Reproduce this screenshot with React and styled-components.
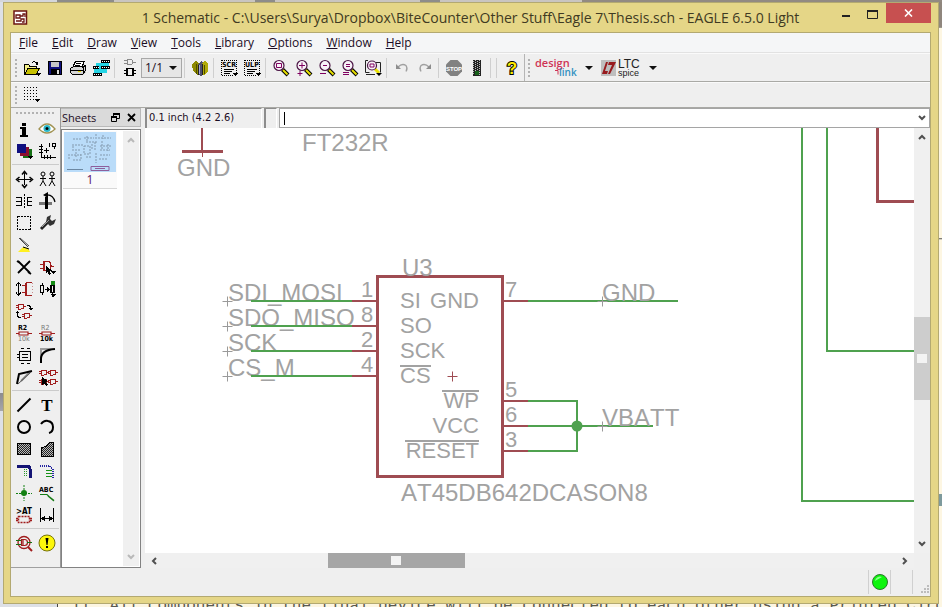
import React from "react";
import styled, { createGlobalStyle, css } from "styled-components";

const ui = '"Open Sans", "Noto Sans", sans-serif';
const small = '"DejaVu Sans Condensed", "Open Sans", sans-serif';
const chrome = "#efefef";
const gold = "#e5d687";
const goldEdge = "#b3a971";

const Global = createGlobalStyle`
  * { box-sizing: border-box; }
  body { margin: 0; background: #fdf6e2; font-family: ${ui}; font-size: 12px; color: #1b0c24; }
  button, input, select { font: inherit; color: inherit; }
`;

/* ---------- desktop and window frame ---------- */

const Desktop = styled.div`
  display: grid;
  grid-template: 2px minmax(0, 1fr) 3px / 3px minmax(0, 1fr) 3px;
  height: 100vh;
  overflow: hidden;
`;
const TabStrip = styled.div`
  grid-column: 1 / -1;
  background: linear-gradient(90deg, #d4d6da 57px, #8d8c8a 57px, #8d8c8a 114px, #c9c5c0 114px, #c9c5c0 255px, #8d8c8a 255px, #8d8c8a 275px, #c9c5c0 275px, #c9c5c0 420px, #8d8c8a 420px, #8d8c8a 440px, #c9c5c0 440px, #c9c5c0 582px, #928a82 582px);
`;
const LeftEdge = styled.div`
  background: linear-gradient(#dde0e6 391px, #8c8c90 391px, #a6a6aa 409px, #dde0e6 409px);
`;
const RightEdge = styled.div`
  background: linear-gradient(#8f867d 25px, #3c3c3c 25px, #fdf6e2 26px, #fdf6e2 236px, #555 236px, #fdf6e2 238px, #fdf6e2 492px, #7e9a9c 492px, #7e9a9c 504px, #fdf6e2 504px);
`;
const PageLine = styled.p`
  grid-column: 1 / -1;
  margin: 0;
  padding-left: 71px;
  background: linear-gradient(90deg, #dde0e6 57px, #444 57px, #444 58px, #fdf6e2 58px);
  font: 16px/4px "Liberation Mono", monospace;
  white-space: pre;
  overflow: hidden;
  color: #5a5a52;
`;
const Window = styled.main`
  display: flex;
  flex-direction: column;
  min-width: 0;
  min-height: 0;
  padding: 0 7px 6px 6px;
  background: ${gold};
  border: 1px solid ${goldEdge};
`;
const TitleBar = styled.header`
  display: grid;
  grid-template-columns: 1fr auto 1fr;
  align-items: center;
  height: 29px;
  flex: none;
`;
const AppMark = styled.svg`
  width: 16px;
  height: 16px;
  margin-left: 3px;
`;
const Title = styled.h1`
  margin: 0;
  padding-top: 1px;
  font: 400 14px/20px ${ui};
  color: #3f3a22;
  white-space: nowrap;
`;
const WindowButtons = styled.div`
  display: flex;
  justify-content: flex-end;
  align-self: start;
`;
const WindowButton = styled.button`
  display: grid;
  place-items: center;
  width: ${(p) => (p.$close ? 45 : 27)}px;
  height: ${(p) => (p.$close ? 20 : 22)}px;
  padding: 0;
  border: 0;
  background: ${(p) => (p.$close ? "#c75050" : "transparent")};
`;
const Client = styled.div`
  display: flex;
  flex-direction: column;
  flex: 1;
  min-height: 0;
  border: 1px solid ${goldEdge};
  background: ${chrome};
`;

/* ---------- menu and tool bars ---------- */

const MenuBar = styled.nav`
  display: flex;
  gap: 14px;
  height: 20px;
  flex: none;
  padding-left: 8px;
  background: #f5f6f7;
  border-bottom: 1px solid #e2e2e2;
`;
const MenuItem = styled.button`
  padding: 0;
  border: 0;
  background: none;
  font: 12px/20px ${ui};
  &::first-letter { text-decoration: underline; }
`;
const ToolBar = styled.div`
  display: flex;
  align-items: center;
  height: ${(p) => p.$height}px;
  flex: none;
  padding-left: 3px;
  border-top: 1px solid #fafafa;
  border-bottom: ${(p) => p.$rule}px solid #a9a9a5;
`;
const grip = css`
  background-image: radial-gradient(circle, #b2b2b2 1px, transparent 1px);
  background-size: 4px 4px;
`;
const Grip = styled.span`
  width: 4px;
  height: 20px;
  margin-right: 2px;
  ${grip}
`;
const IconButton = styled.button`
  display: grid;
  place-items: center;
  width: 23px;
  height: 22px;
  padding: 0;
  border: 0;
  background: none;
  svg { overflow: visible; }
`;
const Separator = styled.span`
  width: 1px;
  height: 20px;
  margin: 0 3px 0 2px;
  background: #cfcfcf;
`;
const BarEdge = styled.span`
  width: 1px;
  height: 27px;
  margin: 0 2px 0 1px;
  background: #b5b5b5;
`;
const SheetPicker = styled.div`
  display: grid;
  align-items: center;
  select, svg { grid-area: 1 / 1; }
  select {
    appearance: none;
    width: 41px;
    height: 20px;
    padding: 0 0 0 3px;
    border: 1px solid #a8a8a8;
    border-radius: 0;
    background: #e6e6e6;
    font: 12px/18px ${ui};
  }
  svg { justify-self: end; margin-right: 5px; pointer-events: none; }
`;
const BrandButton = styled.button`
  display: flex;
  align-items: center;
  gap: 6px;
  padding: 0;
  margin-right: 8px;
  border: 0;
  background: none;
`;

/* ---------- body ---------- */

const Body = styled.div`
  display: flex;
  flex: 1;
  min-height: 0;
`;
const Palette = styled.aside`
  width: 49px;
  padding: 1px 1px 0;
  border-bottom: 1px solid #a0a0a0;
`;
const PaletteGrip = styled.div`
  height: 8px;
  margin: 0 3px;
  background-image: radial-gradient(circle, #b2b2b2 1px, transparent 1px);
  background-size: 4px 8px;
`;
const ToolGroup = styled.div`
  display: grid;
  grid-template-columns: 23px 23px;
  grid-auto-rows: 22px;
  padding: 1px 0 2px;
  & + & { border-top: 1px solid #cbcbcb; padding-top: 3px; }
`;
const Empty = styled.span``;

const Sheets = styled.section`
  display: flex;
  flex-direction: column;
  width: 81px;
  border-left: 1px solid #9a9a9a;
`;
const SheetsHead = styled.div`
  display: flex;
  align-items: center;
  gap: 7px;
  height: 19px;
  padding: 0 4px 0 1px;
  border: 1px solid #b9b9b9;
  border-left: 0;
  background: #dadada;
`;
const SheetsTitle = styled.h2`
  flex: 1;
  margin: 0;
  font: 400 11px/17px ${ui};
`;
const TinyButton = styled.button`
  display: grid;
  padding: 0;
  border: 0;
  background: none;
  color: #505050;
`;
const SheetsBox = styled.div`
  display: flex;
  justify-content: space-between;
  flex: 1;
  min-height: 0;
  margin-top: 2px;
  padding: 1px;
  border: 1px solid #828282;
  background: #fff;
`;
const SheetItem = styled.button`
  align-self: start;
  width: 54px;
  padding: 1px 1px 0;
  border: 0;
  border-bottom: 1px solid #d8d8d8;
  background: #fafafa;
  font: 12px/16px ${ui};
  color: #5c0f63;
  svg { display: block; }
`;

const Editor = styled.section`
  display: flex;
  flex-direction: column;
  flex: 1;
  min-width: 0;
  margin-left: 4px;
`;
const CommandRow = styled.div`
  display: flex;
  gap: 2px;
  height: 20px;
  flex: none;
`;
const Readout = styled.output`
  width: ${(p) => p.$width}px;
  padding-left: 2px;
  border: 1px solid #8d8d8d;
  border-width: 1px 0 0 2px;
  border-right: 1px solid #fff;
  font: 11px/18px ${small};
  white-space: nowrap;
`;
const CommandBox = styled.div`
  display: flex;
  align-items: center;
  flex: 1;
  min-width: 0;
  padding: 0 3px 0 4px;
  border: 1px solid #a5a5a5;
  background: #fff;
`;
const Caret = styled.span`
  width: 1px;
  height: 13px;
  background: #000;
`;
const CommandInput = styled.input`
  flex: 1;
  min-width: 0;
  padding: 0;
  border: 0;
  outline: 0;
  background: none;
`;
const Viewport = styled.div`
  display: grid;
  grid-template: minmax(0, 1fr) 15px / minmax(0, 1fr) 16px;
  flex: 1;
  min-height: 0;
`;
const Drawing = styled.svg`
  width: 100%;
  height: 100%;
  background: #fff;
  font-family: "Liberation Sans", Arial, sans-serif;
  font-size: 24px;
  font-kerning: none;
  fill: #a2a2a2;
`;
const ScrollTrack = styled.div`
  display: flex;
  flex-direction: ${(p) => (p.$vertical ? "column" : "row")};
  align-items: stretch;
  justify-content: space-between;
  background: #f0f0f0;
  ${(p) => p.$narrow && "width: 16px;"}
`;
const ScrollArrow = styled.button`
  display: grid;
  place-items: center;
  flex: 0 0 18px;
  padding: 0;
  border: 0;
  background: none;
  color: ${(p) => (p.$faint ? "#b9b9b9" : "#505050")};
`;
const Gap = styled.span`
  flex: ${(p) => p.$share} 1 0;
`;
const Thumb = styled.span`
  display: grid;
  place-items: center;
  flex: ${(p) => p.$share} 1 0;
  background: ${(p) => (p.$dark ? "#a6a6a6" : "#cdcdcd")};
  &::after { content: ""; width: 10px; height: 9px; background: #f3f3f3; }
`;
const StatusBar = styled.footer`
  display: flex;
  justify-content: flex-end;
  align-items: center;
  height: 28px;
  flex: none;
`;
const StatusCell = styled.span`
  display: grid;
  place-items: ${(p) => (p.$grip ? "end" : "center")};
  width: ${(p) => (p.$grip ? 18 : 22)}px;
  height: 24px;
  border-left: 1px solid #d0d0d0;
`;

/* ---------- icons: 18-unit grid ---------- */

const K = "#000";
const R = "#a01c1c";
const s = (d, stroke = K, w = 1, extra = {}) => (
  <path d={d} fill="none" stroke={stroke} strokeWidth={w} {...extra} />
);
const f = (d, fill = K, extra = {}) => <path d={d} fill={fill} {...extra} />;
const label = (x, y, size, text, fill = K, weight = "bold") => (
  <text x={x} y={y} fontSize={size} fontFamily="DejaVu Sans Condensed, sans-serif" fontWeight={weight} fill={fill}>{text}</text>
);
const corner = f("M12 14h6l-3 3z");
const lens = (
  <>
    {s("M10.5 10.5l5.5 5.5", "#000", 4)}
    {s("M11 11l4.500 4.500", "#e8e000", 2)}
    <circle cx="7" cy="6.500" r="5" fill="#f8f2f8" stroke="#4a1444" strokeWidth="1.200" />
  </>
);
const gate = (x, y, c = R) =>
  s(`M${x} ${y}h3q3 0 3 2.500q0 2.500-3 2.500h-3zM${x - 2} ${y + 1.5}h2M${x - 2} ${y + 3.5}h2M${x + 6} ${y + 2.5}h2`, c);
const frame = (
  <>
    {s("M1.500 1.500h15v12", K, 1, { strokeDasharray: "1 1" })}
    {s("M1.500 1v16M2 16.500h11", K, 1, { strokeDasharray: "1 1" })}
  </>
);

const icons = {
  open: <>{f("M1 5h5l1 2h6v2H5l-3 6z", "#f4f08a")}{f("M4 10h13l-4 6H1z", "#c6c000")}{s("M1.500 15.500v-10h4l1.500 2h6v2.500M4.500 9.500h12l-3.500 6h-11zM9 3.500q3-2 5 1M12.500 5.500h2v-3")}{corner}</>,
  save: <>{f("M2 2h14v14H2z", "#10107c")}{f("M5 2h8v6H5z", "#c6c6c6")}{f("M5 10h9v6H5z", "#000")}{f("M11 11h2v4h-2z", "#ddd")}{s("M2.500 2.500h13v13h-12l-1-1z")}</>,
  print: <>{f("M2 8l3-2h11l1 2v5l-3 3H4l-3-2z", "#d5d5d5")}{f("M6 2h9l-2 6H4z", "#fff")}{s("M6.500 2.500h8.500l-2 6M6.500 2.500l-2.500 5M1.500 9.500l3-2h10l2-1v5l-3 4h-10l-2-2zM2 11.500h12M7 4.500h5M6 6.500h5M14 8v6")}{f("M9 12h3v1H9z", "#e5dc00")}</>,
  cam: <>{f("M4 4h11v10H4z", "#25d5e5")}{f("M9 1h9v3H9zM9 7h9v3H9zM1 7h6v3H1zM1 14h9v3H1z")}{f("M9 4h8v3H9zM2 10h8v4H2z", "#25d5e5")}{s("M10 2.500h8M10 8.500h8M2 8.500h5M2 15.500h8", "#fff", 1, { strokeDasharray: "1 1" })}</>,
  schematic: <>{s("M6 .5h3q3 0 3 2.500t-3 2.500h-3zM3 1.500h3M3 4.500h3M12 3.500h3", "#8a8a8a")}{s("M6 9.500h6v7H6zM3 11.500h3M3 14.500h3M12 11.500h3M12 14.500h3", K, 1.5)}</>,
  library: <>{f("M1 5l4-3 3 2v10l-2 2-4-4z", "#8d8900")}{f("M7 5l3-3 3 2v11l-3 2-3-2z", "#50506e")}{f("M11 4l3-2 3 2v9l-4 3h-2z", "#b0aa08")}{s("M5.500 5v10M13.500 6v9", "#4f4c00")}{s("M8.500 6v9", "#a4a4d6")}{s("M7 5.500v10M11 5v11", "#222")}</>,
  scr: <>{frame}{label(2, 8, 7, "SCR")}{s("M4 10.500h10M4 12.500h8M4 14.500h6")}{corner}</>,
  ulp: <>{frame}{label(2, 8, 7, "ULP")}{s("M4 10.500h10M4 12.500h8M4 14.500h6")}{corner}</>,
  zoomFit: <>{lens}{s("M4.500 4.500h5v4h-5z", "#800060")}</>,
  zoomIn: <>{lens}{s("M7 3.500v6M4 6.500h6", "#800060")}{s("M5 12v5M2.500 14.500h5", "#800060")}</>,
  zoomOut: <>{lens}{s("M5 6.500h4", "#800060")}{s("M2 14.500h6", "#800060")}</>,
  zoomRedraw: <>{lens}{s("M5 5.500h4M5 7.500h4M2 13.500h6M2 15.500h6", "#800060")}</>,
  zoomSelect: <>{s("M4 1.500H1.500v12h4M12 3.500h4.500v10M2 15.500h9", "#222")}{s("M11 10l4 4", "#e8e000", 3)}<circle cx="8" cy="6.500" r="4.500" fill="#f8f2f8" stroke="#4a1444" strokeWidth="1.200" />{s("M6 5h4v3H6z", "#800060")}{corner}</>,
  undo: <>{s("M5 8q4-4 8-1.500q2 3 0 6", "#a0a0a0", 1.3)}{f("M3 5v5h5z", "#8d8d8d")}</>,
  redo: <>{s("M13 8q-4-4-8-1.500q-2 3 0 6", "#a0a0a0", 1.3)}{f("M15 5v5h-5z", "#8d8d8d")}</>,
  stop: <>{f("M5.500 1h7L17 5.500v7L12.500 17h-7L1 12.500v-7z", "#818181")}<text x="9" y="11.500" textAnchor="middle" fontSize="6" fontFamily="Liberation Sans, sans-serif" fontWeight="bold" fill="#fff">STOP</text></>,
  go: <>{f("M5 1h8v16H5z", "#222")}{s("M5.500 2v14M7.500 1v15M9.500 2v14M11.500 1v15", "#bbb", 1, { strokeDasharray: "1 1" })}{f("M7 12h4v4H7z", "#16601a")}</>,
  help: <text x="9" y="15" textAnchor="middle" fontSize="17" fontFamily="Liberation Sans, sans-serif" fontWeight="bold" fill="#ffec00" stroke="#000" strokeWidth="2" paintOrder="stroke">?</text>,
  grid: <>{[2, 5, 8, 11, 14].map((y) => <React.Fragment key={y}>{s(`M1 ${y - 0.5}h15`, K, 1, { strokeDasharray: "1 2" })}</React.Fragment>)}{f("M11 13h6l-3 3z")}</>,
  info: f("M7 3h4v3H7zM5 7h6v8h2v2H5v-2h2V9H5z"),
  eye: <>{f("M1 9q8-9 16 0q-8 8-16 0z", "#fff")}{s("M1 9q8-10 16 0q-8 8-16 0z", "#a09252", 1.3)}<circle cx="9" cy="8.500" r="3.500" fill="#28b8c8" /><circle cx="9" cy="8.500" r="1.500" /></>,
  layers: <>{f("M8 7h9v9H8z", "#157015")}{f("M5 5h9v9H5z", "#8c1030")}{f("M2 2h9v9H2z", "#101080")}{corner}</>,
  mark: <>{s("M3.500 2v13h14M1 4.500h4M1 7.500h4M1 10.500h4M6.500 13v4M9.500 13v4M12.500 13v4M6 8.500h5M8.500 6v5M11.500 1v4M14 1.500h3v3h-3zM16.500 4v3")}</>,
  move: <>{s("M9.500 3v12M3 9.500h13")}{s("M7 4.500l2.500-3 2.500 3M7 14.500l2.500 3 2.500-3M4.500 7l-3 2.500 3 2.500M14.500 7l3 2.500-3 2.500", K, 1.5)}</>,
  copy: <>{[5, 14].map((x) => <React.Fragment key={x}><circle cx={x} cy="4" r="2" fill="none" stroke="#000" />{s(`M${x} 6v5l-3 5M${x} 11l3 5M${x - 3} 8.500h6`)}</React.Fragment>)}</>,
  mirror: <>{s("M1 5.500h5v8h-5M1 9.500h5M17 5.500h-5v8h5M17 9.500h-5")}{s("M9.500 2v15", K, 1, { strokeDasharray: "2 1" })}</>,
  rotate: <>{f("M1 10h13v3H1z", "#777")}{f("M7 5h3v12H7z")}{s("M8 3q7-1 9 7", K, 1.2)}{f("M5 3l5-3v6z")}</>,
  group: s("M2.500 2.500h13v13h-13z", K, 1, { strokeDasharray: "2 1" }),
  change: <>{s("M3 15l8-8", "#222", 3)}{f("M8 8l1-5 4-2-1 4 2 2 4-2-2 5-4 2z", "#333")}{s("M4 13l7-7", "#999", 1)}</>,
  paste: <>{s("M4 2l9 9M5 2l9 8", "#444", 1)}{f("M8 11l5 1 2 4H3z", "#fff021")}{s("M8 11l6 2", K)}</>,
  remove: s("M3 3l12 12M15 3L3 15M2 3l3 2M13 14l3 2", K, 1.8),
  add: <>{s("M6 3.500h3q4 0 4 4.500t-4 4.500h-3zM2 6.500h4M2 10.500h4M13 8.500h3", R, 1.3)}{f("M8 8l7 5h-3l1 3-2 1-1-3-2 1z")}{f("M13 13h5l-3 3z")}</>,
  pinswap: <>{s("M3.500 3v12M1 5.500l2.500-3 2.500 3M1 12.500l2.500 3 2.500-3")}{s("M11 2.500v13M17 2.500h-6M11 15.500h6M7 5.500h4M7 12.500h4", R, 1.2)}{s("M17 3v12", "#c98d8d", 1, { strokeDasharray: "1 2" })}</>,
  replace: <>{s("M2.500 5.500h3v7h-3zM4.500 3v2M4.500 13v2M7 9.500h4M9 7.500l2 2-2 2")}{s("M13 5.500h3v7h-3zM14.500 2v3M14.500 13v4", K, 1.3)}{f("M13 1h4v4h-4z", "#148b14")}{f("M12 14h6l-3 3z")}</>,
  gateswap: <>{gate(3, 2)}{gate(9, 11)}{s("M12 3q4 0 4 5M6 16q-4 0-4-5")}{f("M13 6h5l-2 3zM1 11h4l-3-2z")}</>,
  name: <>{label(3, 6, 7, "R2")}{s("M1 9.500h3M13 9.500h4M4 8h9v3H4z", R, 1.2)}{label(3, 17, 7, "10k", "#777", "normal")}</>,
  value: <>{label(3, 6, 7, "R2", "#777", "normal")}{s("M1 9.500h3M13 9.500h4M4 8h9v3H4z", R, 1.2)}{label(2, 17, 7, "10k")}</>,
  smash: <>{s("M4 5.500h11M4 14.500h11M4.500 5v10M15.500 5v10M2 8.500h3M2 11.500h3")}{s("M7 8.500h6M7 11.500h6M6 2.500h3M12 2.500h3M6 17.500h3M12 17.500h3", K, 1)}</>,
  miter: <>{s("M3 16V3h13", "#9c9c9c", 2)}{s("M3 17v-4q0-9 14-10", K, 2)}</>,
  split: <>{s("M6 13L15 4", "#8c8c8c", 2)}{s("M2 16l2-10L17 3", K, 2)}{s("M3 16L16 4", "#555", 1)}</>,
  invoke: <>{gate(3, 2)}{gate(12, 2)}{gate(3, 11)}{gate(12, 11)}{f("M4 9l6 4-3 1 3 3-2 1-2-3-2 2z")}</>,
  wire: s("M2.500 15.500l13-13", K, 2),
  text: <text x="9" y="15" textAnchor="middle" fontSize="17" fontFamily="Liberation Serif, serif" fontWeight="bold" fill="#000">T</text>,
  circle: <circle cx="9" cy="9" r="6" fill="none" stroke="#000" strokeWidth="2" />,
  arc: s("M3 6q3-4 7-3q5 1 5 6q0 5-4 6", K, 2),
  rect: <>{f("M2 3h14v12H2z", "url(#hatch)")}{s("M2.500 3.500h13v11h-13z")}</>,
  polygon: <>{f("M3 8l5-2 3-4h5v14H3z", "url(#hatch)")}{s("M3.500 8l5-2 3-3.500h4v13.500h-12z")}</>,
  bus: <>{s("M2 4h10q3 0 3 3v9", "#141474", 3)}{s("M9 7.500h4M9 9.500h4M9 11.500h4M9 13.500h4", "#2b992b", 1, { strokeDasharray: "1 1" })}</>,
  net: <>{s("M2 3.500h9l4 4v9", "#2525a0", 2, { strokeDasharray: "1 1" })}{s("M8 8.500h6M8 11.500h6M8 14.500h6", "#159015", 1)}</>,
  junction: <><circle cx="9" cy="9" r="3" fill="#128012" />{s("M9 1v16M1 9.500h16", "#128012", 1, { strokeDasharray: "2 1" })}</>,
  netLabel: <>{label(1, 8, 7, "ABC")}{s("M2 10.500h7l2 2 5 4M10 12l6 5", "#167c16", 1.2)}</>,
  attribute: <>{label(1, 8, 8, ">AT")}{s("M3.500 10.500h11v6h-11zM1 12.500h2M1 14.500h2M15 12.500h2M15 14.500h2", R, 1.5, { strokeDasharray: "2 1" })}</>,
  dimension: <>{s("M2.500 2v14M15.500 2v14M3 12.500h12", K, 1.2)}{f("M3 12.500l4-3v6zM15 12.500l-4-3v6z")}</>,
  erc: <><circle cx="9" cy="8.500" r="6" fill="none" stroke={R} strokeWidth="1.300" />{s("M13 13l4 4", R, 2)}{s("M6.500 5.500h3q3 0 3 3t-3 3h-3zM8 6v5", R, 1.2)}{s("M1 6.500h5M1 10.500h5M12 8.500h5", "#147014", 1.2)}</>,
  errors: <><circle cx="9" cy="9" r="8" fill="#fdf70a" stroke="#77730a" />{f("M7.500 4h3l-1 7h-1zM8 12h2v2H8z")}</>,
};

const smoothIcons = ["stop", "errors", "help", "text", "eye", "circle", "wire", "arc", "remove", "undo", "redo", "junction", "change", "name", "value", "netLabel", "attribute", "move", "copy", "miter", "split", "erc", "zoomFit", "zoomIn", "zoomOut", "zoomRedraw", "zoomSelect", "paste", "rotate"];

const Icon = ({ name }) => (
  <svg width="18" height="18" viewBox="0 0 18 18" aria-hidden="true" shapeRendering={smoothIcons.includes(name) ? "auto" : "crispEdges"}>
    {icons[name]}
  </svg>
);
const Tool = ({ name }) => <IconButton aria-label={name}><Icon name={name} /></IconButton>;

const DownTriangle = () => (
  <svg width="8" height="4" viewBox="0 0 8 4" aria-hidden="true"><path d="M0 0h8l-4 4z" fill="#111" /></svg>
);
const chevrons = { up: "M1 6l3-3 3 3", down: "M1 2l3 3 3-3", left: "M6 1L3 4l3 3", right: "M2 1l3 3-3 3" };
const Chevron = ({ dir }) => (
  <svg width="8" height="8" viewBox="0 0 8 8" aria-hidden="true">
    <path d={chevrons[dir]} fill="none" stroke="currentColor" strokeWidth="2" />
  </svg>
);
const Tools = ({ names }) => names.map((n, i) => (n === "|" ? <Separator key={i} /> : <Tool key={i} name={n} />));

/* ---------- schematic ---------- */

const WIRE = "#4fa14f";
const PART = "#9f4c52";
const nets = [["SDI_MOSI", 1, 301], ["SDO_MISO", 8, 326], ["SCK", 2, 351], ["CS_M", 4, 376]];
const Cross = ({ x, y, color = "#9a9a9a" }) => <path d={`M${x - 5} ${y}h10M${x} ${y - 5}v10`} stroke={color} fill="none" />;

const Schematic = () => (
  <Drawing role="img" aria-label="Schematic sheet 1">
    <g transform="translate(-145 -128)">
      <path d="M202 100v52" stroke={PART} strokeWidth="2" />
      <path d="M202.500 152v5" stroke={PART} />
      <path d="M182 151.500h41" stroke={PART} strokeWidth="3" />
      <text x="177" y="176">GND</text>
      <text x="302" y="151">FT232R</text>

      <g fill="none" stroke={WIRE} strokeWidth="2">
        <path d="M802 100v401h3000M827 100v251h3000" />
        <path d="M528 301h150M528 401h49v50h-49M528 426h125" />
      </g>
      <path d="M877.500 100v101.500h3000" fill="none" stroke={PART} strokeWidth="3" />
      <circle cx="577" cy="426" r="5.500" fill={WIRE} />

      {nets.map(([name, pin, y]) => (
        <g key={name}>
          <text x="228" y={y}>{name}</text>
          <text x="361" y={y - 4} fontSize="22">{pin}</text>
          <path d={`M251 ${y}h101`} stroke={WIRE} strokeWidth="2" />
          <path d={`M352 ${y}h25`} stroke={PART} strokeWidth="2" />
          <Cross x={227.5} y={y + 0.5} />
        </g>
      ))}
      {[[7, 301], [5, 401], [6, 426], [3, 451]].map(([pin, y]) => (
        <g key={pin}>
          <text x="505" y={y - 4} fontSize="22">{pin}</text>
          <path d={`M503 ${y}h25`} stroke={PART} strokeWidth="2" />
        </g>
      ))}
      <rect x="377.500" y="276.500" width="125" height="200" fill="none" stroke={PART} strokeWidth="3" />
      <text x="402" y="276">U3</text>
      <text x="401" y="501">AT45DB642DCASON8</text>
      <g fontSize="22">
        <text x="400" y="308">SI</text>
        <text x="400" y="333">SO</text>
        <text x="400" y="358">SCK</text>
        <text x="400" y="383">CS</text>
        <g textAnchor="end">
          <text x="479" y="308">GND</text>
          <text x="479" y="408">WP</text>
          <text x="479" y="433">VCC</text>
          <text x="479" y="458">RESET</text>
        </g>
      </g>
      <path d="M400 366h31M442 391h37M405 441h74" stroke="#a2a2a2" strokeWidth="2" />
      <Cross x={452.5} y={376.5} color={PART} />
      <text x="602" y="301">GND</text>
      <text x="602" y="426">VBATT</text>
      <Cross x={602.5} y={301.5} />
      <Cross x={602.5} y={426.5} />
    </g>
  </Drawing>
);

const SheetPreview = () => (
  <svg width="52" height="40" viewBox="0 0 52 40" aria-hidden="true">
    <rect width="52" height="40" fill="#badcf9" />
    <g fill="none" stroke="#8299ae" strokeDasharray="2 1">
      <path d="M9 7h8M20 6h10M23 4v5M32 2v6M34 6h13M8 13h12M22 10h12M31 10v8M36 14h12M8 18h8M20 14h6v8h-6zM36 18h10M7 23h10M9 28h9M22 25h6M32 21v10M36 23h10M35 27h9" />
      <path d="M9 14v3M12 20v6M5 22v6M17 22v5M38 9v9M44 12v7M39 3v4M28 12v5" />
    </g>
    <path d="M3 37.500h16" stroke="#6c88a2" />
    <path d="M27 34.500h18v4h-18zM31 36.500h10" fill="none" stroke="#8d5f9c" />
  </svg>
);

const menus = ["File", "Edit", "Draw", "View", "Tools", "Library", "Options", "Window", "Help"];

export default function App() {
  return (
    <Desktop>
      <Global />
      <TabStrip />
      <LeftEdge />
      <Window>
        <TitleBar>
          <AppMark viewBox="0 0 16 16" aria-hidden="true">
            <path d="M1 1h12.500v13H1z" fill="#fff" stroke="#6b1512" strokeWidth="1.500" />
            <path d="M3 5h4v3H3zM7 6h3V4h2v3M3 11h5v-2h3v3h-2" fill="none" stroke="#6b1512" strokeWidth="1.300" />
          </AppMark>
          <Title>1 Schematic - C:\Users\Surya\Dropbox\BiteCounter\Other Stuff\Eagle 7\Thesis.sch - EAGLE 6.5.0 Light</Title>
          <WindowButtons>
            <WindowButton aria-label="Minimize">
              <svg width="10" height="10" viewBox="0 0 10 10"><path d="M1 7h8" stroke="#222" strokeWidth="2" /></svg>
            </WindowButton>
            <WindowButton aria-label="Maximize">
              <svg width="11" height="9" viewBox="0 0 11 9"><path d="M.5 1h10v7.500H.5z" fill="none" stroke="#222" /><path d="M0 1h11" stroke="#222" strokeWidth="2" /></svg>
            </WindowButton>
            <WindowButton $close aria-label="Close">
              <svg width="9" height="8" viewBox="0 0 9 8"><path d="M1 .5l7 7M8 .5l-7 7" stroke="#fff" strokeWidth="1.600" /></svg>
            </WindowButton>
          </WindowButtons>
        </TitleBar>
        <Client>
          <MenuBar>{menus.map((m) => <MenuItem key={m}>{m}</MenuItem>)}</MenuBar>
          <ToolBar $height={29} $rule={1}>
            <Grip />
            <Tools names={["open", "save", "print", "cam", "|", "schematic"]} />
            <SheetPicker>
              <select aria-label="Sheet" defaultValue="1/1"><option>1/1</option></select>
              <DownTriangle />
            </SheetPicker>
            <Tools names={["|", "library", "|", "scr", "ulp", "|", "zoomFit", "zoomIn", "zoomOut", "zoomRedraw", "zoomSelect", "|", "undo", "redo", "|", "stop", "go", "|", "|", "help"]} />
            <BarEdge />
            <Grip />
            <BrandButton aria-label="design link">
              <svg width="46" height="22" viewBox="0 0 46 22" fontFamily="Open Sans, sans-serif" fontWeight="600">
                <text x="2" y="10" fontSize="11" fill="#cf3455">design</text>
                <text x="26" y="19" fontSize="10" fill="#2f8fc0">link</text>
                <path d="M22 13.500h3v4" fill="none" stroke="#cf3455" />
              </svg>
              <DownTriangle />
            </BrandButton>
            <BrandButton aria-label="LTC spice">
              <svg width="42" height="20" viewBox="0 0 42 20" fontFamily="Liberation Sans, sans-serif" fill="#222">
                <path d="M0 2h15v16H0z" fill="#bebebe" />
                <path d="M5 4h2L4 13h3l-1 3H1zM8 4h7L9 16H7l4-9H7z" fill="#981b1e" />
                <text x="17" y="10" fontSize="12">LTC</text>
                <text x="17" y="18" fontSize="9">spice</text>
              </svg>
              <DownTriangle />
            </BrandButton>
          </ToolBar>
          <ToolBar $height={26} $rule={1}>
            <Grip />
            <Tool name="grid" />
          </ToolBar>
          <Body>
            <Palette>
              <PaletteGrip />
              <ToolGroup><Tools names={["info", "eye", "layers", "mark"]} /></ToolGroup>
              <ToolGroup>
                <Tools names={["move", "copy", "mirror", "rotate", "group", "change", "paste"]} />
                <Empty />
                <Tools names={["remove", "add", "pinswap", "replace", "gateswap"]} />
                <Empty />
                <Tools names={["name", "value", "smash", "miter", "split", "invoke"]} />
              </ToolGroup>
              <ToolGroup>
                <Tools names={["wire", "text", "circle", "arc", "rect", "polygon", "bus", "net", "junction", "netLabel", "attribute", "dimension"]} />
              </ToolGroup>
              <ToolGroup><Tools names={["erc", "errors"]} /></ToolGroup>
            </Palette>
            <Sheets>
              <SheetsHead>
                <SheetsTitle>Sheets</SheetsTitle>
                <TinyButton aria-label="Float panel">
                  <svg width="9" height="9" viewBox="0 0 9 9" fill="none" stroke="#000"><path d="M2.500 3V.5h6v5H6M.5 3.500h5v5h-5z" /><path d="M2 1h7M0 4h6" strokeWidth="2" /></svg>
                </TinyButton>
                <TinyButton aria-label="Close panel">
                  <svg width="9" height="9" viewBox="0 0 9 9"><path d="M1 1l7 7M8 1L1 8" stroke="#000" strokeWidth="1.800" /></svg>
                </TinyButton>
              </SheetsHead>
              <SheetsBox>
                <SheetItem><SheetPreview />1</SheetItem>
                <ScrollTrack $vertical $narrow>
                  <ScrollArrow $faint aria-label="Scroll sheets up"><Chevron dir="up" /></ScrollArrow>
                  <ScrollArrow $faint aria-label="Scroll sheets down"><Chevron dir="down" /></ScrollArrow>
                </ScrollTrack>
              </SheetsBox>
            </Sheets>
            <Editor>
              <CommandRow>
                <Readout $width={117}>0.1 inch (4.2 2.6)</Readout>
                <Readout $width={13} />
                <CommandBox>
                  <Caret />
                  <CommandInput aria-label="Command line" />
                  <TinyButton aria-label="Command history"><Chevron dir="down" /></TinyButton>
                </CommandBox>
              </CommandRow>
              <Viewport>
                <Schematic />
                <ScrollTrack $vertical>
                  <ScrollArrow aria-label="Scroll up"><Chevron dir="up" /></ScrollArrow>
                  <Gap $share={171} /><Thumb $share={83} /><Gap $share={135} />
                  <ScrollArrow aria-label="Scroll down"><Chevron dir="down" /></ScrollArrow>
                </ScrollTrack>
                <ScrollTrack>
                  <ScrollArrow aria-label="Scroll left"><Chevron dir="left" /></ScrollArrow>
                  <Gap $share={165} /><Thumb $dark $share={137} /><Gap $share={432} />
                  <ScrollArrow aria-label="Scroll right"><Chevron dir="right" /></ScrollArrow>
                </ScrollTrack>
              </Viewport>
            </Editor>
          </Body>
          <StatusBar>
            <StatusCell>
              <svg width="18" height="18" viewBox="0 0 18 18" aria-label="Ready">
                <circle cx="9" cy="9" r="7.500" fill="#0df50d" stroke="#2b7a2b" />
                <path d="M4 8a5 5 0 0 1 7-4z" fill="#8dff8d" />
              </svg>
            </StatusCell>
            <StatusCell />
            <StatusCell $grip>
              <svg width="9" height="9" viewBox="0 0 9 9" aria-hidden="true"><path d="M6 0h2v2H6zM3 3h2v2H3zM6 3h2v2H6zM0 6h2v2H0zM3 6h2v2H3zM6 6h2v2H6z" fill="#bcbcbc" /></svg>
            </StatusCell>
          </StatusBar>
        </Client>
      </Window>
      <RightEdge />
      <PageLine>11  All components in the final device will be connected to each other using a Printed Circuit</PageLine>
      <svg width="0" height="0" aria-hidden="true">
        <defs>
          <pattern id="hatch" width="2" height="2" patternUnits="userSpaceOnUse">
            <rect width="2" height="2" fill="#bbb" />
            <path d="M0 0h1v1H0zM1 1h1v1H1z" fill="#222" />
          </pattern>
        </defs>
      </svg>
    </Desktop>
  );
}
